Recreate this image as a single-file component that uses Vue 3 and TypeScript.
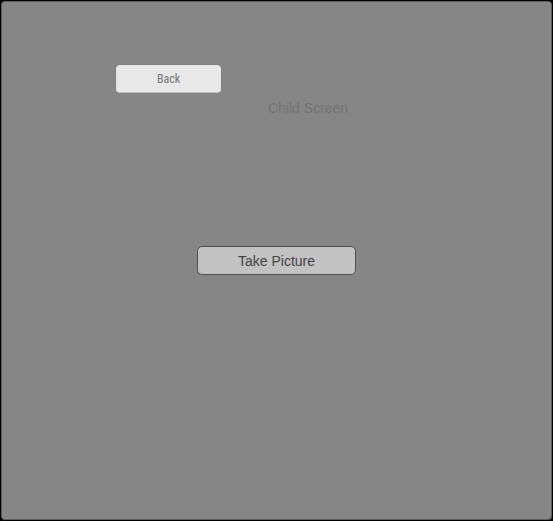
<script setup lang="ts">
import { ref } from 'vue'

const title = ref<string>('Child Screen')
const emit = defineEmits<{ back: []; capture: [] }>()
</script>

<template>
  <main class="screen">
    <header class="top">
      <button class="back" type="button" @click="emit('back')">Back</button>
      <h1 class="title">{{ title }}</h1>
    </header>
    <button class="capture" type="button" @click="emit('capture')">Take Picture</button>
  </main>
</template>

<style>
body {
  margin: 0;
  background: #000;
}
</style>

<style scoped>
.screen {
  box-sizing: border-box;
  min-height: 100vh;
  display: grid;
  grid-template-rows: 1fr auto 1fr;
  border: 1px solid #000;
  border-radius: 5px;
  background: #868686;
  box-shadow: inset 0 0 0 1px #5c5c5c;
  font-family: "Liberation Sans", Arial, sans-serif;
}

.top {
  display: flex;
  flex-direction: column;
  align-items: flex-start;
  gap: 7px;
  padding-top: 64px;
  padding-left: 115px;
}

.back {
  box-sizing: border-box;
  width: 105px;
  height: 28px;
  padding: 0;
  border: 1px solid #e4e4e4;
  border-bottom-color: #c4c4c4;
  border-radius: 4px;
  background: #e8e8e8;
  box-shadow: 0 0 1px #686868;
  color: #777;
  font-family: "Liberation Sans Narrow", "Arial Narrow", "Roboto Condensed", "Liberation Sans", sans-serif;
  font-size: 12px;
}

.title {
  margin: 0 0 0 152px;
  color: #737373;
  font-size: 14px;
  font-weight: 400;
  line-height: 16px;
}

.capture {
  box-sizing: border-box;
  width: 159px;
  height: 29px;
  padding: 0;
  justify-self: center;
  border: 1px solid #505050;
  border-radius: 5px;
  background: #c2c2c2;
  color: #444;
  font-family: inherit;
  font-size: 14px;
}
</style>
